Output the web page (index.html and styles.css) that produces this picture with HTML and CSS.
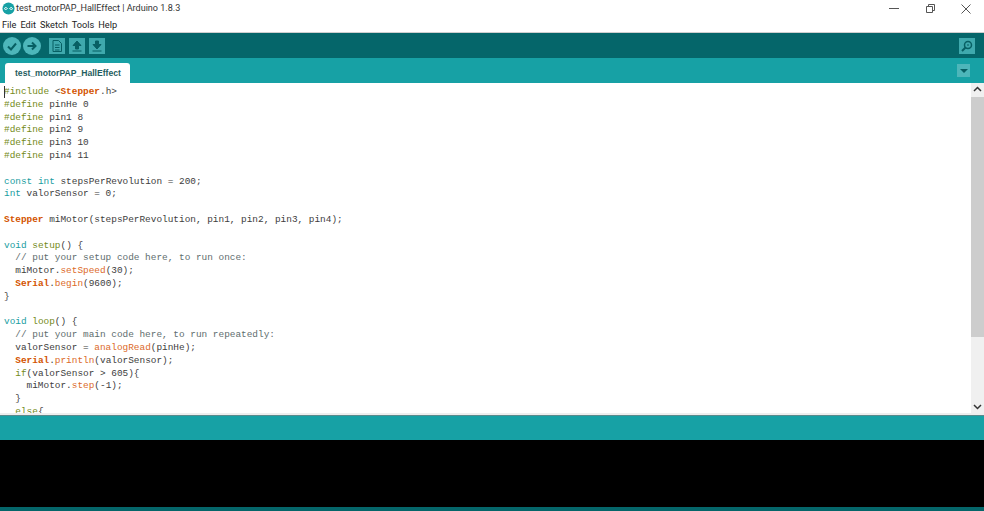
FILE: index.html
```html
<!DOCTYPE html>
<html lang="en">
<head>
<meta charset="utf-8">
<title>test_motorPAP_HallEffect | Arduino 1.8.3</title>
<link rel="stylesheet" href="styles.css">
</head>
<body>
<div class="app">
  <header class="titlebar">
    <svg class="logo" viewBox="0 0 14 14" width="13" height="13"><circle cx="7" cy="7" r="6.5" fill="#17a1a5"/><path d="M5.800 7C5 5.600 3 5.600 2.700 7S5 8.400 5.800 7ZM8.200 7C9 5.600 11 5.600 11.300 7S9 8.400 8.200 7Z" fill="none" stroke="#fff" stroke-width="1"/></svg>
    <span class="title">test_motorPAP_HallEffect | Arduino 1.8.3</span>
    <div class="winctl">
      <svg viewBox="0 0 36 18" width="36" height="18"><path d="M13 8.500h10" stroke="#555" fill="none"/></svg>
      <svg viewBox="0 0 36 18" width="36" height="18"><path d="M14.500 6.500h6v6h-6zM16.500 6.500v-2h6v6h-2" stroke="#555" fill="none"/></svg>
      <svg viewBox="0 0 36 18" width="36" height="18"><path d="M13.500 4.500l9 9M22.500 4.500l-9 9" stroke="#555" fill="none"/></svg>
    </div>
  </header>
  <nav class="menubar"><span>File</span><span>Edit</span><span>Sketch</span><span>Tools</span><span>Help</span></nav>
  <div class="toolbar">
    <svg class="round" viewBox="0 0 18 18" width="18" height="18"><circle cx="9" cy="9" r="9" fill="#4db6ba"/><path d="M5 9.500l3 3 5-6" fill="none" stroke="#075f63" stroke-width="2"/></svg>
    <svg class="round" viewBox="0 0 18 18" width="18" height="18"><circle cx="9" cy="9" r="9" fill="#4db6ba"/><path d="M4.500 9h8M9 5.500l3.500 3.500-3.500 3.500" fill="none" stroke="#075f63" stroke-width="2"/></svg>
    <svg class="square first" viewBox="0 0 16 16" width="16" height="16"><rect width="16" height="16" fill="#3fa9ad"/><path d="M4 2.500h5.500l3 3v8H4zM6 7h4.500M6 9.500h4.500M6 12h4.500" fill="none" stroke="#075f63"/></svg>
    <svg class="square" viewBox="0 0 16 16" width="16" height="16"><rect width="16" height="16" fill="#3fa9ad"/><path d="M8 3l4 4.500H9.500V11h-3V7.500H4zM3.500 13h9" fill="#075f63" stroke="#075f63"/></svg>
    <svg class="square" viewBox="0 0 16 16" width="16" height="16"><rect width="16" height="16" fill="#3fa9ad"/><path d="M8 11L4 6.500h2.500V3h3v3.500H12zM3.500 13h9" fill="#075f63" stroke="#075f63"/></svg>
    <svg class="serial" viewBox="0 0 16 16" width="16" height="16"><rect width="16" height="16" fill="#3fa9ad"/><circle cx="9" cy="7" r="3.500" fill="none" stroke="#075f63" stroke-width="1.500"/><path d="M6.500 9.500L3 13" stroke="#075f63" stroke-width="2"/><path d="M8 7h2" stroke="#075f63"/></svg>
  </div>
  <div class="tabs">
    <div class="tab">test_motorPAP_HallEffect</div>
    <div class="tabmenu"><i></i></div>
  </div>
  <main class="editor">
<pre class="code"><span class="caret"></span><span class="kw">#include</span> &lt;<b class="cl">Stepper</b>.h&gt;
<span class="kw">#define</span> pinHe 0
<span class="kw">#define</span> pin1 8
<span class="kw">#define</span> pin2 9
<span class="kw">#define</span> pin3 10
<span class="kw">#define</span> pin4 11

<span class="ty">const</span> <span class="ty">int</span> stepsPerRevolution = 200;
<span class="ty">int</span> valorSensor = 0;

<b class="cl">Stepper</b> miMotor(stepsPerRevolution, pin1, pin2, pin3, pin4);

<span class="ty">void</span> <span class="kw">setup</span>() {
  <span class="cm">// put your setup code here, to run once:</span>
  miMotor.<span class="fn">setSpeed</span>(30);
  <b class="cl">Serial</b>.<span class="fn">begin</span>(9600);
}

<span class="ty">void</span> <span class="kw">loop</span>() {
  <span class="cm">// put your main code here, to run repeatedly:</span>
  valorSensor = <span class="fn">analogRead</span>(pinHe);
  <b class="cl">Serial</b>.<span class="fn">println</span>(valorSensor);
  <span class="kw">if</span>(valorSensor &gt; 605){
    miMotor.<span class="fn">step</span>(-1);
  }
  <span class="kw">else</span>{
</pre>
    <div class="scrollbar">
      <svg viewBox="0 0 13 13" width="13" height="13"><path d="M3 8l3.500-3.500L10 8" fill="none" stroke="#333" stroke-width="1.500"/></svg>
      <div class="track"><div class="thumb"></div></div>
      <svg viewBox="0 0 13 13" width="13" height="13"><path d="M3 5l3.500 3.500L10 5" fill="none" stroke="#333" stroke-width="1.500"/></svg>
    </div>
  </main>
  <div class="status"></div>
  <div class="console"></div>
  <div class="footer"></div>
</div>
</body>
</html>
```
FILE: styles.css
```css
* { box-sizing: border-box; }
html, body { margin: 0; height: 100%; overflow: hidden; background: #fff; }
.app { width: 984px; height: 511px; display: flex; flex-direction: column; font-family: Roboto, "Noto Sans", sans-serif; color: #333; }
.titlebar { height: 16px; display: flex; align-items: center; padding-left: 2px; font-size: 9.05px; flex: none; }
.logo { flex: none; margin-right: 1px; }
.title { color: #333; white-space: nowrap; }
.winctl { margin-left: auto; display: flex; align-self: flex-start; }
.menubar { height: 17px; display: flex; gap: 4px; align-items: center; padding-left: 2px; font-size: 9.2px; color: #222; flex: none; border-bottom: 1px solid #cfcfcf; }
.toolbar { height: 25px; background: #05666a; display: flex; align-items: center; padding: 0 9px 0 3px; gap: 2px; flex: none; }
.toolbar .first { margin-left: 6px; }
.square { margin-left: 2px; }
.serial { margin-left: auto; }
.tabs { height: 25px; background: #17a1a5; display: flex; align-items: flex-end; padding-left: 5px; flex: none; position: relative; }
.tab { width: 125px; height: 20px; background: #fff; border-radius: 3px 3px 0 0; font: bold 8.6px/20px "Liberation Sans", Arial, sans-serif; color: #1f5d60; padding-left: 10px; white-space: nowrap; }
.tabmenu { position: absolute; right: 14px; top: 6px; width: 13px; height: 13px; background: #4db6ba; display: flex; align-items: center; justify-content: center; }
.tabmenu i { border: 4px solid transparent; border-top: 4px solid #075f63; border-bottom: 0; }
.editor { height: 332px; display: flex; flex: none; overflow: hidden; border-bottom: 2px solid #eeeeee; background: #fff; }
.code { margin: 0; flex: 1; padding: 3px 0 0 4px; font: 9.42px/12.8px "Liberation Mono", "Courier New", monospace; color: #3d3d3d; overflow: hidden; position: relative; }
.caret { position: absolute; left: 4px; top: 3px; width: 1px; height: 12px; background: #333; }
.kw { color: #748a20; }
.ty { color: #1a9da1; }
.cl { color: #d35400; font-weight: bold; }
.fn { color: #dc6a2a; }
.cm { color: #5e6d6e; }
.scrollbar { width: 13px; background: #f0f0f0; display: flex; flex-direction: column; flex: none; }
.scrollbar svg { flex: none; }
.track { flex: 1; padding-top: 1px; }
.thumb { height: 240px; background: #cdcdcd; }
.status { height: 25px; background: #17a1a5; flex: none; border-top: 1px solid #5a8a8c; }
.console { height: 67px; background: #000; flex: none; }
.footer { flex: 1; background: #05666a; }
```
